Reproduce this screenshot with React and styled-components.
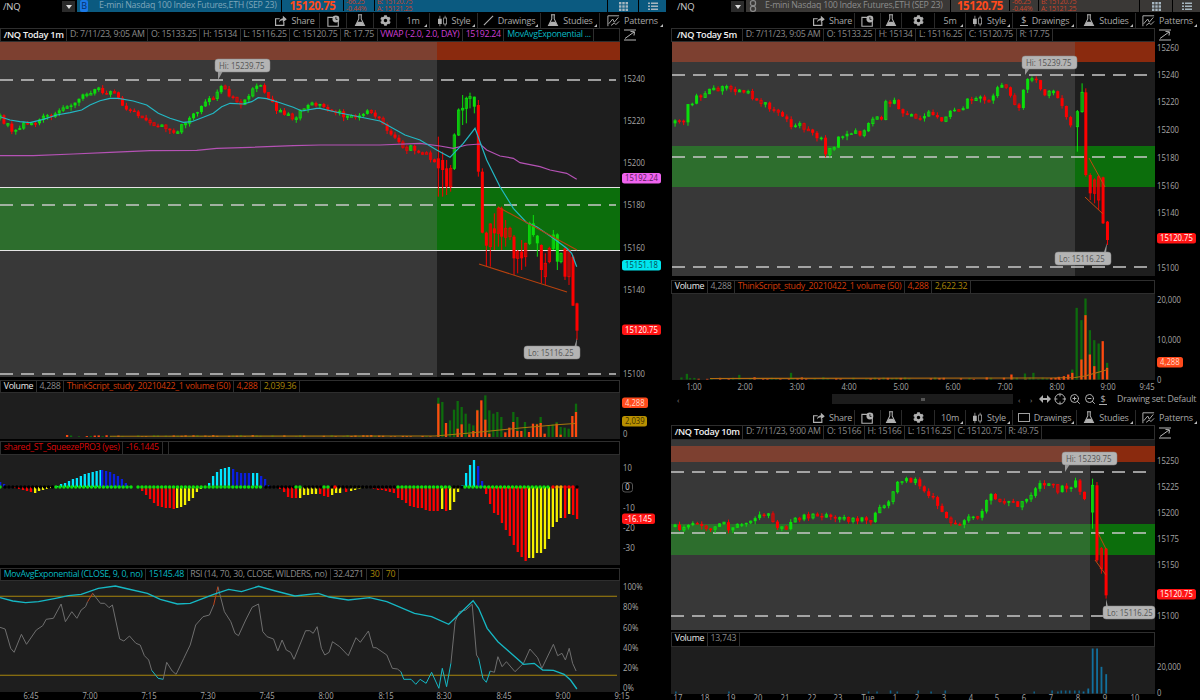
import React from "react";
import styled, { createGlobalStyle } from "styled-components";
import { FaCog } from "react-icons/fa";
import { ZoomIn, ZoomOut, Crosshair } from "lucide-react";

const GREEN = "#0be00b";
const RED = "#ff0000";
const FONT = '"Open Sans", "Liberation Sans", sans-serif';

const Global = createGlobalStyle`
  html, body { margin: 0; padding: 0; background: #000; }
  #root { width: 1200px; height: 700px; overflow: hidden; }
`;

const Page = styled.div`
  display: flex;
  gap: 5px;
  width: 1200px;
  height: 700px;
  overflow: hidden;
  background: #000;
  font-family: ${FONT};
`;

const Column = styled.div`
  display: flex;
  flex-direction: column;
  flex: none;
  width: ${(p) => p.$w}px;
`;

const QuoteBar = styled.div`
  display: flex;
  align-items: flex-start;
  flex: none;
  height: 13px;
  overflow: hidden;
  background: ${(p) => p.$bg};
  border-bottom: 1px solid #000;
  box-sizing: border-box;
  font-size: 8.8px;
  letter-spacing: -0.25px;
  color: ${(p) => p.$text};
`;

const SymbolBox = styled.div`
  display: flex;
  align-items: center;
  justify-content: space-between;
  flex: none;
  box-sizing: border-box;
  width: ${(p) => p.$w}px;
  height: 13px;
  padding: 0 2px 0 ${(p) => p.$pad}px;
  background: #000;
  color: #ccc;
  font-size: 9.5px;
`;

const DropButton = styled.span`
  display: flex;
  align-items: center;
  justify-content: center;
  width: 13px;
  height: 11px;
  background: #2b2b2b;
  &::after {
    content: "";
    border: 3px solid transparent;
    border-top: 4px solid #ddd;
    border-bottom: 0;
  }
`;

const LinkBadge = styled.span`
  flex: none;
  width: 8px;
  height: 12px;
  margin: 0 0 0 3px;
  border-radius: 2px;
  background: ${(p) => p.$bg};
  color: #08306a;
  font-size: 9px;
  line-height: 12px;
  text-align: center;
`;

const Description = styled.div`
  flex: none;
  box-sizing: border-box;
  width: ${(p) => p.$w}px;
  height: 13px;
  padding-left: ${(p) => p.$pad}px;
  border-right: 1px solid #000;
  line-height: 11px;
  white-space: nowrap;
`;

const LastPrice = styled.div`
  flex: none;
  width: ${(p) => p.$w}px;
  height: 13px;
  text-align: center;
  color: #ff4a1c;
  font-size: 11.5px;
  font-weight: 700;
  letter-spacing: -0.4px;
  line-height: 12px;
`;

const TinyStack = styled.div`
  flex: none;
  box-sizing: border-box;
  width: ${(p) => p.$w}px;
  height: 13px;
  padding-left: 2px;
  border-left: 1px solid #000;
  color: #c9432a;
  font-size: 7px;
  line-height: 7px;
  white-space: nowrap;
  margin-top: -2px;
`;

const BarSpacer = styled.div`
  flex: 1;
`;

const BarIcon = styled.div`
  display: flex;
  align-items: center;
  justify-content: center;
  flex: none;
  width: ${(p) => p.$w}px;
  height: 13px;
  border-left: 1px solid #000;
`;

const Toolbar = styled.div`
  display: flex;
  justify-content: flex-end;
  flex: none;
  height: 15px;
  background: #000;
`;

const ToolButton = styled.div`
  position: relative;
  display: flex;
  align-items: center;
  justify-content: center;
  gap: 4px;
  flex: none;
  box-sizing: border-box;
  width: ${(p) => p.$w}px;
  height: 15px;
  border-right: 1px solid ${(p) => (p.$last ? "transparent" : "#2a2a2a")};
  color: #a8a8a8;
  font-size: 9px;
  letter-spacing: -0.2px;
  white-space: nowrap;
  &::after {
    content: "";
    display: ${(p) => (p.$menu ? "block" : "none")};
    position: absolute;
    right: 2px;
    bottom: 1px;
    border-left: 3px solid transparent;
    border-bottom: 3px solid #bbb;
  }
`;

const HeaderLine = styled.div`
  display: flex;
  flex: none;
  height: ${(p) => p.$h}px;
  margin-top: ${(p) => p.$top || 0}px;
`;

const InfoRow = styled.div`
  display: flex;
  flex: 1;
  min-width: 0;
  box-sizing: border-box;
  border: 1px solid #2e2e2e;
  background: #000;
  overflow: hidden;
`;

const Cell = styled.span`
  flex: none;
  padding: 0 ${(p) => p.$pad || 2.7}px;
  border-right: 1px solid #2e2e2e;
  color: ${(p) => p.$color || "#8a8a8a"};
  font-size: ${(p) => (p.$title ? 9.2 : 8.8)}px;
  font-weight: ${(p) => (p.$title ? 600 : 400)};
  letter-spacing: -0.3px;
  line-height: 11px;
  white-space: nowrap;
`;

const AxisCorner = styled.div`
  display: flex;
  align-items: center;
  flex: none;
  box-sizing: border-box;
  width: ${(p) => p.$w}px;
  padding-left: 3px;
`;

const Chart = styled.svg`
  display: block;
  flex: none;
`;

const AxisText = styled.text`
  font-family: ${FONT};
  font-size: 9.6px;
  fill: ${(p) => p.$fill || "#a6a6a6"};
  dominant-baseline: middle;
`;

const BadgeText = styled.text`
  font-family: ${FONT};
  font-size: 9.4px;
  fill: ${(p) => p.$fill};
  dominant-baseline: middle;
`;

const ScrollRow = styled.div`
  display: flex;
  align-items: center;
  flex: none;
  height: 12px;
  margin-bottom: 5px;
  color: #a8a8a8;
  font-size: 8.8px;
  letter-spacing: -0.2px;
`;

const ScrollTrack = styled.div`
  display: flex;
  align-items: center;
  justify-content: center;
  flex: none;
  width: 181px;
  height: 10px;
  margin-left: 147px;
  background: #1c1c1c;
  &::after {
    content: "";
    width: 4px;
    height: 3px;
    background: #555;
  }
`;

const ArrowMark = styled.span`
  flex: none;
  width: ${(p) => p.$w}px;
  color: #888;
  font-size: 8px;
  text-align: center;
`;

const ZoomTools = styled.div`
  display: flex;
  align-items: center;
  gap: 3px;
  flex: none;
  margin: 0 10px 0 2px;
  color: #b0b0b0;
`;

const DrawingSet = styled.span`
  flex: none;
  white-space: nowrap;
`;

const DollarIcon = styled.span`
  display: block;
  width: 8px;
  border-bottom: 1px solid #b0b0b0;
  color: #b0b0b0;
  font-size: 9px;
  line-height: 10px;
  text-align: center;
`;

/* ---- toolbar drawings ---- */
const ShareIcon = () => (
  <svg width="13" height="11" viewBox="0 0 16 14" fill="#b0b0b0">
    <path d="M1 4h6v1.4H2.500v7h9V9H13v5H1z" />
    <path d="M6 9.500C6.300 6.200 8.500 4.200 11 4V1l5 4.300-5 4.200V6.600c-2 .1-3.600.9-5 2.900z" />
  </svg>
);
const ClockBoxIcon = () => (
  <svg width="13" height="12" viewBox="0 0 16 15">
    <path d="M1 3h13v11H1z" fill="none" stroke="#b0b0b0" strokeWidth="1.400" />
    <circle cx="11" cy="5" r="4.300" fill="#b0b0b0" />
    <path d="M11 2.500V5.500h2" stroke="#000" strokeWidth="1" fill="none" />
  </svg>
);
const FlaskIcon = () => (
  <svg width="12" height="13" viewBox="0 0 14 16">
    <path d="M4.500 1h5M5.500 1v5L1.500 14h11L8.500 6V1" fill="none" stroke="#b0b0b0" strokeWidth="1.300" />
    <path d="M4 9.500h6L12.500 14.500h-11z" fill="#b0b0b0" />
  </svg>
);
const CandlesIcon = () => (
  <svg width="11" height="12" viewBox="0 0 14 16" fill="#b0b0b0">
    <path d="M3.500 1v14" stroke="#b0b0b0" />
    <rect x="1" y="5" width="5" height="7" />
    <path d="M10.500 1v14" stroke="#b0b0b0" />
    <rect x="8.500" y="4" width="4" height="8" fill="#000" stroke="#b0b0b0" />
  </svg>
);
const PenIcon = () => (
  <svg width="11" height="11" viewBox="0 0 12 12">
    <path d="M1 11 11 1" stroke="#b0b0b0" strokeWidth="1.200" />
  </svg>
);
const RectIcon = () => (
  <svg width="12" height="9" viewBox="0 0 12 9">
    <rect x=".5" y=".5" width="11" height="8" fill="none" stroke="#a0a0a0" />
  </svg>
);
const PatternsIcon = () => (
  <svg width="13" height="12" viewBox="0 0 16 15" fill="none" stroke="#b0b0b0" strokeWidth="1.200">
    <path d="M1 1h14M1 1v13" />
    <path d="M2 11 7 5l2 4 5-6M5 13l4-3 2 2 4-4" />
  </svg>
);
const GridIcon = () => (
  <svg width="9" height="9" viewBox="0 0 9 9" fill="#a6b6c0">
    {[0, 3.300, 6.600].map((y) =>
      [0, 3.300, 6.600].map((x) => <rect key={`${x}-${y}`} x={x} y={y} width="2.400" height="2.400" />)
    )}
  </svg>
);
const ListIcon = () => (
  <svg width="10" height="9" viewBox="0 0 10 9" fill="#a6b6c0">
    {[0.500, 3.500, 6.500].map((y) => (
      <g key={y}>
        <rect x="0" y={y} width="2" height="1.500" />
        <rect x="3" y={y} width="7" height="1.500" />
      </g>
    ))}
  </svg>
);
const ChainIcon = () => (
  <svg width="8" height="12" viewBox="0 0 8 12" fill="none" stroke="#8a8a8a" strokeWidth="1.300">
    <rect x="1.500" y=".7" width="5" height="5" rx="2" />
    <rect x="1.500" y="6.300" width="5" height="5" rx="2" />
  </svg>
);
const ExpandIcon = () => (
  <svg width="14" height="12" viewBox="0 0 14 12" fill="none" stroke="#b8b8b8" strokeWidth="1">
    <path d="M1 1h12M1 11h12M2 9.500 11 3M7.500 2.500 11.500 2.800 11 6.500" />
  </svg>
);
const SpreadIcon = () => (
  <svg width="12" height="8" viewBox="0 0 12 8" fill="#b0b0b0">
    <path d="M0 4l4-4v8zM12 4 8 0v8z" />
    <rect x="3" y="3" width="6" height="2" />
  </svg>
);

/* ---- chart data helpers ---- */
const makeRand = (seed) => {
  let s = seed;
  return () => {
    s = (s * 16807) % 2147483647;
    return s / 2147483647;
  };
};

const interp = (keys, x) => {
  for (let i = 1; i < keys.length; i++) {
    if (x <= keys[i][0]) {
      const [x0, y0] = keys[i - 1];
      const [x1, y1] = keys[i];
      return y0 + ((y1 - y0) * (x - x0)) / (x1 - x0 || 1);
    }
  }
  return keys[keys.length - 1][1];
};

const genCandles = (keys, step, seed, noise = 6) => {
  const rand = makeRand(seed);
  const out = [];
  const last = keys[keys.length - 1][0];
  let prev = interp(keys, keys[0][0]);
  for (let x = keys[0][0]; x <= last; x += step) {
    const close = interp(keys, x) + (rand() - 0.5) * noise;
    const top = Math.min(prev, close);
    const bottom = Math.max(prev, close);
    const up = close < prev;
    const kind = up ? (rand() < 0.5 ? "gh" : "g") : rand() < 0.3 ? "rh" : "r";
    out.push({ x, top, bottom, wTop: top - rand() * 3, wBottom: bottom + rand() * 4, kind });
    prev = close;
  }
  return out;
};

const zoomPts = (pts, ox, sx, oy) => pts.map(([X, Y]) => [ox + X / sx, oy + Y / 3]);

const handCandles = (rows, ox, sx, oy) =>
  rows.map(([X, t, b, wt, wb, kind]) => ({
    x: ox + X / sx,
    top: oy + t / 3,
    bottom: oy + b / 3,
    wTop: oy + wt / 3,
    wBottom: oy + wb / 3,
    kind,
  }));

const line = (pts) => pts.map(([x, y]) => `${x.toFixed(1)},${y.toFixed(1)}`).join(" ");

// the screenshot is squeezed sideways, so text widths are set per character
const textW = (t) =>
  [...String(t)].reduce((sum, ch) => {
    if (ch === "%") return sum + 6.500;
    if (",.: ".includes(ch)) return sum + 2;
    if (ch === "-") return sum + 3;
    return sum + 4.400;
  }, 0);

const fit = (t) => ({ textLength: textW(t), lengthAdjust: "spacingAndGlyphs" });

/* 1m chart */
const EARLY_1M = genCandles(
  [
    ...zoomPts(
      [[0, 175], [40, 210], [75, 195], [150, 165], [195, 150], [255, 95], [300, 90], [345, 100], [375, 140], [450, 180], [495, 210], [534, 210], [585, 155], [645, 105], [660, 70], [684, 105], [720, 130], [765, 80], [786, 80], [825, 145], [885, 180], [915, 140], [960, 130]],
      0, 3, 60
    ),
    [345, 116], [370, 113], [385, 125], [400, 145], [420, 152], [435, 160],
  ],
  3.950,
  71
);
const LATE_1M = handCandles(
  [
    [55, 235, 265, 170, 350, "r"], [68, 240, 270, 215, 350, "r"], [80, 265, 320, 240, 345, "r"], [92, 265, 320, 255, 335, "rh"],
    [103, 165, 265, 160, 270, "gh"], [116, 90, 165, 85, 168, "gh"], [128, 85, 90, 45, 135, "gh"], [139, 55, 85, 50, 130, "gh"],
    [150, 50, 55, 38, 85, "gh"], [163, 50, 80, 50, 100, "g"], [175, 75, 275, 60, 290, "r"], [187, 275, 458, 265, 460, "r"],
    [199, 458, 497, 455, 560, "r"], [211, 432, 500, 430, 560, "rh"], [223, 445, 460, 400, 510, "r"], [235, 385, 460, 380, 500, "rh"],
    [245, 385, 470, 380, 510, "r"], [257, 445, 472, 420, 500, "rh"], [270, 445, 470, 440, 480, "rh"], [282, 470, 535, 465, 585, "r"],
    [293, 515, 535, 510, 580, "rh"], [305, 515, 535, 480, 570, "r"], [317, 490, 530, 488, 560, "rh"], [329, 430, 490, 425, 495, "gh"],
    [340, 430, 465, 405, 470, "g"], [352, 467, 490, 465, 530, "g"], [364, 495, 570, 493, 610, "r"], [376, 550, 590, 520, 615, "rh"],
    [388, 505, 545, 500, 550, "rh"], [400, 465, 505, 450, 510, "gh"], [412, 463, 545, 460, 570, "g"], [423, 520, 545, 518, 550, "gh"],
    [435, 505, 590, 500, 600, "r"], [447, 510, 590, 505, 615, "rh"], [459, 530, 677, 525, 678, "r"], [471, 670, 752, 668, 780, "r"],
  ],
  420, 3, 80
);
const EMA_1M = [
  ...zoomPts([[0, 170], [30, 180], [60, 185], [90, 188], [130, 178], [170, 165], [210, 158], [245, 150], [270, 135], [300, 122], [330, 115], [355, 115], [400, 123], [440, 135], [475, 160], [510, 175], [550, 187], [575, 185], [610, 172], [640, 160], [665, 140], [690, 130], [730, 132], [755, 125], [775, 113], [800, 116], [840, 128], [880, 142], [905, 153], [950, 145], [960, 145]], 0, 3, 60),
  [340, 113], [380, 121], [405, 135],
  ...zoomPts([[0, 180], [50, 210], [90, 232], [130, 190], [165, 145], [200, 240], [240, 320], [280, 385], [320, 428], [350, 440], [400, 475], [440, 505], [455, 520], [470, 560]], 420, 3, 80),
];
const VWAP_1M = [
  ...zoomPts([[0, 287], [100, 287], [220, 282], [330, 277], [450, 272], [590, 271], [650, 265], [750, 262], [880, 257], [960, 255]], 0, 3, 60),
  [380, 145],
  ...zoomPts([[0, 190], [60, 198], [100, 205], [140, 195], [180, 192], [200, 210], [240, 228], [280, 235], [300, 248], [360, 260], [390, 270], [440, 280], [470, 298]], 420, 3, 80),
];

/* 5m chart */
const SX = 2.958;
const EARLY_5M = genCandles(
  zoomPts(
    [[15, 190], [40, 185], [50, 125], [70, 125], [80, 110], [105, 110], [115, 85], [150, 85], [160, 70], [190, 85], [205, 95], [230, 100], [245, 120], [270, 130], [295, 140], [320, 155], [345, 175], [350, 210], [375, 190], [400, 215], [425, 220], [450, 235], [460, 280], [485, 265], [495, 235], [525, 230], [550, 220], [565, 230], [580, 200], [600, 175], [625, 175], [635, 125], [665, 125], [680, 150], [710, 170], [745, 175], [770, 155], [805, 190], [825, 160], [870, 150], [880, 125], [910, 105], [945, 120], [975, 70], [1005, 100], [1020, 140], [1040, 135], [1050, 55], [1090, 60], [1105, 110], [1130, 90], [1155, 120], [1165, 150], [1180, 185], [1192, 195]],
    670, SX, 60
  ),
  4.300,
  113
);
const LATE_5M = handCandles(
  [
    [1205, 155, 200, 150, 275, "gh"], [1219, 97, 155, 70, 158, "gh"], [1230, 97, 345, 85, 350, "r"], [1243, 345, 400, 340, 420, "r"],
    [1256, 360, 400, 355, 430, "rh"], [1268, 350, 420, 345, 450, "rh"], [1281, 352, 490, 350, 492, "r"], [1294, 485, 540, 483, 555, "r"],
  ],
  670, SX, 60
);

/* 10m chart */
const EARLY_10M = genCandles(
  zoomPts(
    [[15, 270], [30, 280], [50, 260], [65, 255], [85, 255], [105, 275], [130, 280], [145, 262], [160, 255], [175, 285], [190, 270], [215, 255], [240, 245], [265, 235], [280, 230], [295, 235], [310, 265], [345, 270], [375, 245], [400, 238], [440, 233], [480, 240], [520, 248], [560, 250], [570, 235], [585, 265], [600, 255], [612, 210], [640, 208], [652, 180], [665, 155], [680, 130], [705, 130], [735, 130], [745, 170], [770, 170], [785, 190], [800, 225], [825, 245], [850, 265], [880, 240], [905, 245], [920, 220], [935, 195], [945, 165], [965, 195], [985, 200], [1010, 195], [1035, 210], [1050, 185], [1075, 170], [1090, 145], [1115, 135], [1130, 135], [1145, 175], [1155, 150], [1180, 155], [1200, 135], [1225, 190], [1237, 225]],
    670, SX, 435
  ),
  4.450,
  977,
  5
);
const LATE_10M = handCandles(
  [[1250, 145, 225, 125, 275, "gh"], [1263, 145, 370, 135, 375, "r"], [1276, 335, 395, 330, 410, "rh"], [1290, 335, 475, 333, 485, "r"]],
  670, SX, 435
);

/* study bars, x values in screenshot pixels */
const series = (color, x0, heights) => heights.map((h, i) => ({ x: x0 + i * 3.950, h, color }));
const SQUEEZE = [
  ...series("#0a1fe0", 0, [5, 3]),
  ...series(RED, 15, [-1, -2, -3, -4, -5]),
  ...series("#f4f000", 35, [-6, -4, -3, -2, -1]),
  ...series("#00e5ff", 57, [1, 3, 4, 6, 8, 9, 11, 13, 14, 15, 16, 17]),
  ...series("#0a1fe0", 102, [17, 16, 15, 13, 11, 8, 4, 1]),
  ...series(RED, 142, [-4, -8, -12, -16, -19, -20, -21, -21, -22]),
  ...series("#f4f000", 177, [-21, -20, -18, -14, -11, -5, -2]),
  ...series("#00e5ff", 209, [4, 11, 15, 18, 19, 20]),
  ...series("#0a1fe0", 233, [18, 15, 14, 14, 14]),
  ...series("#00e5ff", 253, [14, 14]),
  ...series("#0a1fe0", 261, [11, 8, 2]),
  ...series(RED, 280, [-2, -5, -10, -11, -11]),
  ...series("#f4f000", 300, [-11, -8, -8, -7, -7]),
  ...series(RED, 320, [-7, -9, -10]),
  ...series("#f4f000", 332, [-8, -6, -6]),
  ...series(RED, 346, [-5]),
  ...series("#f4f000", 351, [-4, -3, -2, -1]),
  ...series(RED, 370, [-1, -2, -3, -3, -4, -5, -6]),
  ...series(RED, 398, [-11, -13, -16, -19, -20, -21, -21, -23, -24, -24, -24]),
  ...series("#f4f000", 442, [-22]),
  ...series(RED, 446, [-24]),
  ...series("#f4f000", 450, [-23, -15, -5]),
  ...series("#00e5ff", 462, [2, 14, 22, 27]),
  ...series("#0a1fe0", 478, [21, 6]),
  ...series(RED, 486, [-7, -17, -26, -28, -36, -43, -49, -58, -65, -70, -74]),
  ...series("#f4f000", 529, [-71, -71, -66, -66, -62, -52, -40, -35, -31]),
  ...series(RED, 565, [-31]),
  ...series("#f4f000", 569, [-27]),
  ...series(RED, 573, [-28, -32]),
];
const SQUEEZE_DOTS = [
  ["#0be00b", 0, 3], ["#000", 5, 53], ["#0be00b", 56, 133], ["#0be00b", 138, 263], ["#000", 266, 294],
  ["#0be00b", 296, 302], ["#000", 305, 322], ["#0be00b", 324, 329], ["#000", 332, 335], [RED, 335, 337],
  ["#000", 339, 396], ["#0be00b", 398, 451], ["#000", 454, 463], ["#0be00b", 465, 551], [RED, 553, 555],
  ["#ffa500", 557, 563], [RED, 565, 575], ["#000", 577, 578],
];

const rsiPts = (pts) => pts.map(([X, Y]) => [X / 2.340, 565 + Y / 3]);
const RSI_EMA = rsiPts([[0, 98], [30, 108], [60, 113], [90, 110], [130, 100], [160, 92], [190, 88], [230, 70], [270, 63], [300, 72], [345, 85], [375, 103], [415, 117], [445, 115], [500, 88], [535, 73], [565, 80], [605, 64], [645, 78], [690, 93], [745, 85], [770, 96], [815, 105], [865, 98], [905, 110], [970, 145], [1010, 155], [1050, 178], [1107, 107], [1120, 130], [1140, 190], [1165, 230], [1225, 298], [1250, 295], [1270, 315], [1295, 316], [1320, 328], [1335, 345], [1350, 372]]);
const RSI_GRAY = [
  [[0, 187], [12, 192], [25, 250], [33, 262], [50, 208], [62, 238], [85, 195], [100, 182], [108, 163], [125, 160], [143, 117], [153, 170], [168, 140], [180, 160], [190, 135], [200, 125], [205, 110]],
  [[217, 85], [235, 115], [245, 115], [255, 128], [263, 120], [280, 222], [290, 228], [303, 213], [318, 235], [328, 240], [338, 272], [348, 285], [355, 316]],
  [[382, 343], [390, 292], [403, 318], [412, 328], [430, 280], [445, 240], [458, 180], [475, 155], [490, 150], [500, 120]],
  [[510, 65], [525, 140], [540, 170], [550, 205], [558, 212], [575, 165], [590, 127], [605, 117], [615, 200], [625, 215], [640, 222], [650, 258], [660, 225], [670, 255], [680, 262], [688, 283], [715, 197], [725, 197], [733, 205], [742, 185], [752, 250], [760, 270], [770, 262], [778, 230], [795, 245], [815, 272], [833, 218], [843, 232], [862, 198], [873, 248], [880, 248], [905, 270], [918, 310], [930, 312], [938, 320]],
  [[1055, 295], [1065, 170], [1075, 140], [1090, 135], [1105, 118], [1115, 270], [1120, 280]],
  [[1147, 318], [1157, 322], [1165, 275], [1175, 305], [1185, 290], [1205, 320], [1225, 295], [1240, 252], [1258, 278], [1268, 310], [1295, 238], [1305, 272], [1315, 265], [1323, 285], [1332, 250], [1340, 295], [1348, 318]],
].map(rsiPts);
const RSI_LOW = [
  [[355, 316], [370, 340], [382, 343]],
  [[938, 320], [945, 343], [962, 343], [973, 358], [983, 343], [997, 355], [1010, 322], [1027, 370], [1035, 310], [1045, 365], [1055, 295]],
  [[1120, 280], [1130, 340], [1138, 352], [1147, 318]],
].map(rsiPts);
const RSI_HIGH = [
  [[205, 110], [217, 85]],
  [[500, 120], [510, 65]],
].map(rsiPts);

const smallBars = (x0, x1, step, seed, maxH) => {
  const rand = makeRand(seed);
  const out = [];
  for (let x = x0; x < x1; x += step) {
    const r = rand();
    if (r < 0.300) continue;
    out.push({ x, h: 0.500 + rand() * maxH, color: r < 0.650 ? "#0d6b0d" : "#ff4a10" });
  }
  return out;
};

const VOL_LEFT = [
  [310, 118, 100], [322, 105, 0], [333, 0, 42], [345, 50, 0], [357, 82, 0], [368, 108, 25], [380, 90, 38], [392, 70, 0], [403, 40, 8],
  [415, 35, 18], [427, 82, 80], [439, 0, 110], [451, 125, 52], [463, 80, 10], [475, 70, 0], [487, 75, 0], [499, 60, 0], [511, 0, 14],
  [523, 0, 28], [535, 75, 45], [547, 60, 18], [559, 0, 18], [570, 45, 0], [582, 0, 15], [594, 0, 40], [606, 40, 38], [617, 60, 42],
  [629, 0, 10], [641, 35, 0], [653, 38, 0], [665, 45, 40], [677, 30, 7], [689, 28, 0], [701, 25, 0], [712, 0, 63], [723, 100, 75],
];
const VOL_RIGHT = [
  [1178, 0, 15], [1190, 30, 20], [1203, 215, 0], [1217, 178, 60], [1229, 243, 193], [1242, 148, 75], [1255, 118, 40], [1268, 108, 0], [1280, 0, 115], [1293, 50, 35],
];
const VOL_BLUE = [[1223, 6], [1237, 15], [1250, 135], [1263, 135], [1276, 80], [1290, 58]];

/* ---- chart parts ---- */
const ChartBox = ({ x, y, w, h, children }) => (
  <Chart width={w} height={h} viewBox={`${x} ${y} ${w} ${h}`}>
    {children}
  </Chart>
);

const Candle = ({ c, w = 3 }) => {
  const green = c.kind[0] === "g";
  const color = green ? GREEN : c.kind === "rh" ? "#f00000" : RED;
  const hollow = c.kind.length > 1;
  const height = Math.max(c.bottom - c.top, 1.500);
  return (
    <g>
      <line x1={c.x} x2={c.x} y1={c.wTop} y2={c.wBottom} stroke={color} strokeWidth="1" />
      {hollow ? (
        <rect x={c.x - w / 2 + 0.400} y={c.top} width={w - 0.800} height={height} fill="none" stroke={color} strokeWidth="0.900" />
      ) : (
        <rect x={c.x - w / 2} y={c.top} width={w} height={height} fill={color} />
      )}
    </g>
  );
};

const Zones = ({ x0, x1, split, top, bottom, red, green, bands }) => (
  <g>
    <rect x={x0} y={top} width={split - x0} height={bottom - top} fill="#383838" />
    <rect x={split} y={top} width={x1 - split} height={bottom - top} fill="#1e1e1e" />
    <rect x={x0} y={red[0]} width={split - x0} height={red[1] - red[0]} fill="#7d4030" />
    <rect x={split} y={red[0]} width={x1 - split} height={red[1] - red[0]} fill="#8a2a0e" />
    <rect x={x0} y={green[0]} width={split - x0} height={green[1] - green[0]} fill="#2d6e2d" />
    <rect x={split} y={green[0]} width={x1 - split} height={green[1] - green[0]} fill="#0c6e0c" />
    {bands.map((y) => (
      <line key={y} x1={x0} x2={x1 - 4} y1={y} y2={y} stroke="#c8c8c8" strokeWidth="1.300" strokeDasharray="13 8" />
    ))}
  </g>
);

const Bubble = ({ x, y, w, text, tail }) => (
  <g>
    <path d={`M${tail[0]} ${tail[1]} L${tail[2]} ${y + 12} L${tail[2] + 5} ${y + 12} Z`} fill="#9a9a9a" />
    <rect x={x} y={y} width={w} height={13} rx="3" fill="#b4b4b4" stroke="#8a8a8a" strokeWidth=".5" />
    <BadgeText x={x + 4} y={y + 7} $fill="#555" {...fit(text)}>
      {text}
    </BadgeText>
  </g>
);

const Badge = ({ x, y, w = 39, bg, fill = "#222", text }) => (
  <g>
    <rect x={x} y={y - 5} width={w} height={10.500} rx="2.500" fill={bg} />
    <BadgeText x={x + 3} y={y + 0.500} $fill={fill} {...fit(text)}>
      {text}
    </BadgeText>
  </g>
);

const Labels = ({ x, rows }) =>
  rows.map(([y, t]) => (
    <AxisText key={t} x={x} y={y} {...fit(t)}>
      {t}
    </AxisText>
  ));

const TimeLabels = ({ y, rows }) =>
  rows.map(([x, t]) => (
    <AxisText key={t + x} x={x} y={y} textAnchor="middle" {...fit(t)}>
      {t}
    </AxisText>
  ));

const VolumeBars = ({ rows, ox, sx, base, w = 2.300 }) =>
  rows.map(([X, g, o]) => (
    <g key={X}>
      {g > 0 && <rect x={ox + X / sx - w / 2} y={base - g / 3} width={w} height={g / 3} fill="#0d6b0d" />}
      {o > 0 && <rect x={ox + X / sx - w / 2} y={base - o / 3} width={w} height={o / 3} fill="#ff4a10" />}
    </g>
  ));

/* ---- panes ---- */
const MainOneMin = () => (
  <ChartBox x={0} y={42} w={666} h={335}>
    <Zones x0={0} x1={620} split={437} top={42} bottom={377} red={[42, 60]} green={[188, 250]} bands={[80, 205, 374]} />
    <line x1="0" x2="620" y1="187.500" y2="187.500" stroke="#e4e4e4" strokeWidth="1.200" />
    <line x1="0" x2="620" y1="250.500" y2="250.500" stroke="#e4e4e4" strokeWidth="1.200" />
    {EARLY_1M.map((c, i) => (
      <Candle key={i} c={c} />
    ))}
    {LATE_1M.map((c, i) => (
      <Candle key={i} c={c} />
    ))}
    <polyline points={line(VWAP_1M)} fill="none" stroke="#b552b5" strokeWidth="1.200" />
    <polyline points={line(EMA_1M)} fill="none" stroke="#22b8c4" strokeWidth="1.200" />
    <line x1="498" y1="207" x2="577" y2="250" stroke="#b8420e" strokeWidth="1.100" />
    <line x1="479" y1="264" x2="567" y2="292" stroke="#b8420e" strokeWidth="1.100" />
    <Bubble x={215} y={59} w={55} text="Hi: 15239.75" tail={[218, 80, 218]} />
    <Bubble x={524} y={346} w={56} text="Lo: 15116.25" tail={[577, 338, 571]} />
    <Labels x={623} rows={[[79, "15240"], [121, "15220"], [163, "15200"], [205, "15180"], [248, "15160"], [290, "15140"], [374, "15100"]]} />
    <Badge x={622} y={178} bg="#ef63ef" fill="#5a1a5a" text="15192.24" />
    <Badge x={622} y={265} bg="#00e5ee" fill="#064a50" text="15151.18" />
    <Badge x={622} y={329.500} bg="#ff1414" fill="#fff" text="15120.75" />
  </ChartBox>
);

const VolumeOneMin = () => (
  <ChartBox x={0} y={393} w={666} h={46}>
    <rect x="0" y="393" width="620" height="46" fill="#1e1e1e" />
    {smallBars(62, 436, 3.950, 311, 1.500).map((b, i) => (
      <rect key={i} x={b.x} y={437 - b.h} width="2.300" height={b.h} fill={b.color} />
    ))}
    <VolumeBars rows={VOL_LEFT} ox={335} sx={3} base={437} />
    <polyline points="110,436.300 435,436 470,433 520,428 560,424.500 575,423.500" fill="none" stroke="#a8780c" strokeWidth="1.100" />
    <AxisText x={623} y={434.500} {...fit("0")}>
      0
    </AxisText>
    <Badge x={622} y={402.500} w={26} bg="#ff4a1c" fill="#ffd8c8" text="4,288" />
    <Badge x={622} y={421} w={25} bg="#b89000" fill="#3e3000" text="2,039" />
  </ChartBox>
);

const SqueezeOneMin = () => (
  <ChartBox x={0} y={455} w={666} h={110}>
    <rect x="0" y="455" width="620" height="110" fill="#1e1e1e" />
    {SQUEEZE.map((b, i) => (
      <rect key={i} x={b.x - 1} y={b.h > 0 ? 487 - b.h : 487} width="2.300" height={Math.abs(b.h)} fill={b.color} />
    ))}
    {SQUEEZE_DOTS.map(([color, from, to]) => (
      <line key={`${color}${from}`} x1={from} x2={to} y1="487" y2="487" stroke={color} strokeWidth="3.500" strokeLinecap="round" strokeDasharray="0 3.950" />
    ))}
    <Labels x={623} rows={[[468, "10"], [508, "-10"], [528, "-20"], [548, "-30"]]} />
    <rect x="622.500" y="482.500" width="10" height="9.500" rx="2.500" fill="none" stroke="#555" />
    <AxisText x={625.300} y={487.500} $fill="#ddd" {...fit("0")}>
      0
    </AxisText>
    <Badge x={622} y={518.500} w={33} bg="#ff1414" fill="#fff" text="-16.145" />
  </ChartBox>
);

const RsiOneMin = () => (
  <ChartBox x={0} y={581} w={666} h={119}>
    <rect x="0" y="581" width="620" height="111" fill="#1e1e1e" />
    <line x1="0" x2="617" y1="596.300" y2="596.300" stroke="#a8860c" strokeWidth="1.100" />
    <line x1="0" x2="617" y1="675.300" y2="675.300" stroke="#a8860c" strokeWidth="1.100" />
    {RSI_GRAY.map((pts, i) => (
      <polyline key={i} points={line(pts)} fill="none" stroke="#6e6e6e" strokeWidth="1" />
    ))}
    {RSI_LOW.map((pts, i) => (
      <polyline key={i} points={line(pts)} fill="none" stroke="#16b8c4" strokeWidth="1" />
    ))}
    {RSI_HIGH.map((pts, i) => (
      <polyline key={i} points={line(pts)} fill="none" stroke="#c0441a" strokeWidth="1" />
    ))}
    <polyline points={line(RSI_EMA)} fill="none" stroke="#16b8c4" strokeWidth="1.300" />
    <Labels x={623} rows={[[587, "100%"], [607, "80%"], [628, "60%"], [648, "40%"], [668, "20%"], [688, "0%"]]} />
    <TimeLabels y={696.500} rows={[[31, "6:45"], [90, "7:00"], [149, "7:15"], [208, "7:30"], [267, "7:45"], [326, "8:00"], [386, "8:15"], [444, "8:30"], [504, "8:45"], [563, "9:00"], [622, "9:15"]]} />
  </ChartBox>
);

const MainFiveMin = () => (
  <ChartBox x={671} y={42} w={529} h={234}>
    <Zones x0={672} x1={1155} split={1075} top={42} bottom={276} red={[42, 62]} green={[146, 187]} bands={[75, 157, 267]} />
    {EARLY_5M.map((c, i) => (
      <Candle key={i} c={c} />
    ))}
    {LATE_5M.map((c, i) => (
      <Candle key={i} c={c} />
    ))}
    <polyline points="1089,158 1105,187" fill="none" stroke="#c0480f" strokeWidth="1" />
    <polyline points="1085,197 1103,214" fill="none" stroke="#c0480f" strokeWidth="1" />
    <Bubble x={1022} y={56} w={55} text="Hi: 15239.75" tail={[1025, 75, 1025]} />
    <Bubble x={1055} y={252} w={56} text="Lo: 15116.25" tail={[1107, 243, 1100]} />
    <Labels x={1157} rows={[[48, "15260"], [75, "15240"], [102, "15220"], [130, "15200"], [158, "15180"], [186, "15160"], [213, "15140"], [268, "15100"]]} />
    <Badge x={1157} y={238} bg="#ff1414" fill="#fff" text="15120.75" />
  </ChartBox>
);

const VolumeFiveMin = () => (
  <ChartBox x={671} y={294} w={529} h={99}>
    <rect x="672" y="294" width="483" height="86" fill="#1e1e1e" />
    {smallBars(676, 1064, 4.300, 733, 1.800).map((b, i) => (
      <rect key={i} x={b.x} y={379.500 - b.h} width="2.300" height={b.h} fill={b.color} />
    ))}
    <VolumeBars rows={[[50, 17, 0], [205, 14, 0], [358, 20, 0], [1010, 0, 15], [1050, 18, 0], [1075, 20, 0], [1150, 0, 8], [1165, 0, 10]]} ox={670} sx={SX} base={379.500} />
    <VolumeBars rows={VOL_RIGHT} ox={670} sx={SX} base={379.500} />
    <polyline points="710,378.500 1050,378 1075,377.500 1085,376 1108,369.500" fill="none" stroke="#b46c10" strokeWidth="1.100" />
    <Labels x={1157} rows={[[300, "20,000"], [340, "10,000"], [380, "0"]]} />
    <Badge x={1157} y={362} w={26} bg="#ff4a1c" fill="#ffd8c8" text="4,288" />
    <TimeLabels y={387} rows={[[694, "1:00"], [745, "2:00"], [797, "3:00"], [849, "4:00"], [901, "5:00"], [953, "6:00"], [1005, "7:00"], [1057, "8:00"], [1108, "9:00"], [1147, "9:45"]]} />
  </ChartBox>
);

const MainTenMin = () => (
  <ChartBox x={671} y={438} w={529} h={190}>
    <Zones x0={671} x1={1155} split={1090} top={438} bottom={628} red={[444, 460]} green={[522, 553]} bands={[470, 531, 614]} />
    {EARLY_10M.map((c, i) => (
      <Candle key={i} c={c} />
    ))}
    {LATE_10M.map((c, i) => (
      <Candle key={i} c={c} />
    ))}
    <polyline points="1098,531 1106,547" fill="none" stroke="#c0480f" strokeWidth="1" />
    <polyline points="1095,558 1106,573" fill="none" stroke="#c0480f" strokeWidth="1" />
    <Bubble x={1062} y={450} w={55} text="Hi: 15239.75" tail={[1065, 470, 1065]} />
    <Bubble x={1103} y={604} w={52} text="Lo: 15116.25" tail={[1106, 597, 1106]} />
    <Labels x={1157} rows={[[459, "15250"], [485, "15225"], [511, "15200"], [537, "15175"], [563, "15150"], [614, "15100"]]} />
    <Badge x={1157} y={592} bg="#ff1414" fill="#fff" text="15120.75" />
  </ChartBox>
);

const VolumeTenMin = () => (
  <ChartBox x={671} y={645} w={529} h={55}>
    <rect x="671" y="645" width="484" height="47" fill="#1e1e1e" />
    {[[15, 2], [172, 2], [585, 2], [610, 2], [650, 3], [670, 2], [732, 3], [770, 2], [812, 3], [1075, 2], [1128, 3], [1145, 2], [1155, 3], [1168, 3], [1180, 3], [1195, 3], [1208, 3]].map(([X, h]) => (
      <rect key={X} x={670 + X / SX} y={691.500 - h} width="1.600" height={h} fill="#0f6088" />
    ))}
    {VOL_BLUE.map(([X, h]) => (
      <rect key={X} x={670 + X / SX - 0.800} y={691.500 - h / 3} width="1.800" height={h / 3} fill="#12709e" />
    ))}
    <Labels x={1157} rows={[[665, "20,000"], [691, "0"]]} />
    <TimeLabels y={696.500} rows={[[678, "17"], [705, "18"], [731, "19"], [758, "20"], [785, "21"], [812, "22"], [838, "23"], [868, "Tue"], [895, "1"], [917, "2"], [944, "3"], [971, "4"], [997, "5"], [1024, "6"], [1051, "7"], [1078, "8"], [1105, "9"], [1135, "10"]]} />
  </ChartBox>
);

const ChartToolbar = ({ widths, interval, drawingIcon }) => (
  <Toolbar>
    <ToolButton $w={widths[0]}>
      <ShareIcon />
      Share
    </ToolButton>
    <ToolButton $w={widths[1]}>
      <ClockBoxIcon />
    </ToolButton>
    <ToolButton $w={widths[2]}>
      <FlaskIcon />
    </ToolButton>
    <ToolButton $w={widths[3]}>
      <FaCog size={11} color="#b0b0b0" />
    </ToolButton>
    <ToolButton $w={widths[4]} $menu>
      {interval}
    </ToolButton>
    <ToolButton $w={widths[5]} $menu>
      <CandlesIcon />
      Style
    </ToolButton>
    <ToolButton $w={widths[6]} $menu>
      {drawingIcon}
      Drawings
    </ToolButton>
    <ToolButton $w={widths[7]} $menu>
      <FlaskIcon />
      Studies
    </ToolButton>
    <ToolButton $w={widths[8]} $menu $last>
      <PatternsIcon />
      Patterns
    </ToolButton>
  </Toolbar>
);

const Header = ({ h, top, axis = 46, icon, children }) => (
  <HeaderLine $h={h} $top={top}>
    <InfoRow>{children}</InfoRow>
    <AxisCorner $w={axis}>{icon && <ExpandIcon />}</AxisCorner>
  </HeaderLine>
);

const Quote = ({ bg, text, symbolW, symbolPad, link, descW, descPad, priceW, changeW, bidW, icons }) => (
  <QuoteBar $bg={bg} $text={text}>
    <SymbolBox $w={symbolW} $pad={symbolPad}>
      /NQ
      <DropButton />
    </SymbolBox>
    {link}
    <Description $w={descW} $pad={descPad}>E-mini Nasdaq 100 Index Futures,ETH (SEP 23)</Description>
    <LastPrice $w={priceW}>15120.75</LastPrice>
    <TinyStack $w={changeW}>
      -66.25
      <br />
      -0.44%
    </TinyStack>
    <TinyStack $w={bidW}>
      B: 15120.75
      <br />
      A: 15121.25
    </TinyStack>
    <BarSpacer />
    <BarIcon $w={icons[0]}>
      <GridIcon />
    </BarIcon>
    <BarIcon $w={icons[1]}>
      <ListIcon />
    </BarIcon>
  </QuoteBar>
);

const OHLC = ({ date, o, h, l, c, r }) => (
  <>
    <Cell>{date}</Cell>
    <Cell>O: {o}</Cell>
    <Cell>H: {h}</Cell>
    <Cell>L: {l}</Cell>
    <Cell>C: {c}</Cell>
    <Cell>R: {r}</Cell>
  </>
);

const STUDY = "#d23a08";
const GOLD = "#a98408";
const WHITE = "#e8e8e8";

export default function App() {
  return (
    <Page>
      <Global />
      <Column $w={666}>
        <Quote bg="#0b5a80" text="#7fa6ba" symbolW={77} symbolPad={3} link={<LinkBadge $bg="#1a78e6">B</LinkBadge>} descW={194} descPad={11} priceW={61} changeW={31} bidW={50} icons={[30, 27]} />
        <ChartToolbar widths={[50, 27, 27, 23, 33, 48, 63, 59, 66]} interval="1m" drawingIcon={<PenIcon />} />
        <Header h={14} icon>
          <Cell $title $color="#f0f0f0">/NQ Today 1m</Cell>
          <OHLC date="D: 7/11/23, 9:05 AM" o="15133.25" h="15134" l="15116.25" c="15120.75" r="17.75" />
          <Cell $color="#cf3fd6">VWAP (-2.0, 2.0, DAY)</Cell>
          <Cell $color="#cf3fd6">15192.24</Cell>
          <Cell $color="#08b8c0">MovAvgExponential ...</Cell>
        </Header>
        <MainOneMin />
        <Header h={13} top={3}>
          <Cell $color={WHITE}>Volume</Cell>
          <Cell>4,288</Cell>
          <Cell $color={STUDY}>ThinkScript_study_20210422_1 volume (50)</Cell>
          <Cell $color={STUDY}>4,288</Cell>
          <Cell $color={GOLD}>2,039.36</Cell>
        </Header>
        <VolumeOneMin />
        <Header h={14} top={2}>
          <Cell $color="#d80a0a">shared_ST_SqueezePRO3 (yes)</Cell>
          <Cell $color="#d80a0a">-16.1445</Cell>
          <Cell> </Cell>
        </Header>
        <SqueezeOneMin />
        <Header h={13} top={3}>
          <Cell $color="#08b8c0">MovAvgExponential (CLOSE, 9, 0, no)</Cell>
          <Cell $color="#08b8c0">15145.48</Cell>
          <Cell>RSI (14, 70, 30, CLOSE, WILDERS, no)</Cell>
          <Cell>32.4271</Cell>
          <Cell $color={GOLD}>30</Cell>
          <Cell $color={GOLD}>70</Cell>
        </Header>
        <RsiOneMin />
      </Column>
      <Column $w={529}>
        <Quote bg="#3a3836" text="#8c8c8c" symbolW={75} symbolPad={6} link={<LinkBadge $bg="transparent"><ChainIcon /></LinkBadge>} descW={194} descPad={8} priceW={58} changeW={29} bidW={50} icons={[32, 27]} />
        <ChartToolbar widths={[45, 26, 21, 33, 31, 47, 64, 59, 64]} interval="5m" drawingIcon={<DollarIcon>$</DollarIcon>} />
        <Header h={14} icon axis={45}>
          <Cell $title $color="#f0f0f0" $pad={5}>/NQ Today 5m</Cell>
          <OHLC date="D: 7/11/23, 9:05 AM" o="15133.25" h="15134" l="15116.25" c="15120.75" r="17.75" />
        </Header>
        <MainFiveMin />
        <Header h={14} top={4} axis={45}>
          <Cell $color={WHITE}>Volume</Cell>
          <Cell>4,288</Cell>
          <Cell $color={STUDY}>ThinkScript_study_20210422_1 volume (50)</Cell>
          <Cell $color={STUDY}>4,288</Cell>
          <Cell $color={GOLD}>2,622.32</Cell>
        </Header>
        <VolumeFiveMin />
        <ScrollRow>
          <ArrowMark $w={14}>‹</ArrowMark>
          <ScrollTrack />
          <ArrowMark $w={12}>‹</ArrowMark>
          <ArrowMark $w={12}>›</ArrowMark>
          <ZoomTools>
            <SpreadIcon />
            <Crosshair size={12} />
            <ZoomIn size={12} />
            <ZoomOut size={12} />
            <DollarIcon>$</DollarIcon>
          </ZoomTools>
          <DrawingSet>Drawing set: Default</DrawingSet>
        </ScrollRow>
        <ChartToolbar widths={[45, 26, 21, 33, 31, 47, 64, 59, 64]} interval="10m" drawingIcon={<RectIcon />} />
        <Header h={15} icon axis={45}>
          <Cell $title $color="#f0f0f0">/NQ Today 10m</Cell>
          <OHLC date="D: 7/11/23, 9:00 AM" o="15166" h="15166" l="15116.25" c="15120.75" r="49.75" />
        </Header>
        <MainTenMin />
        <Header h={15} top={2} axis={45}>
          <Cell $color={WHITE}>Volume</Cell>
          <Cell>13,743</Cell>
        </Header>
        <VolumeTenMin />
      </Column>
    </Page>
  );
}
